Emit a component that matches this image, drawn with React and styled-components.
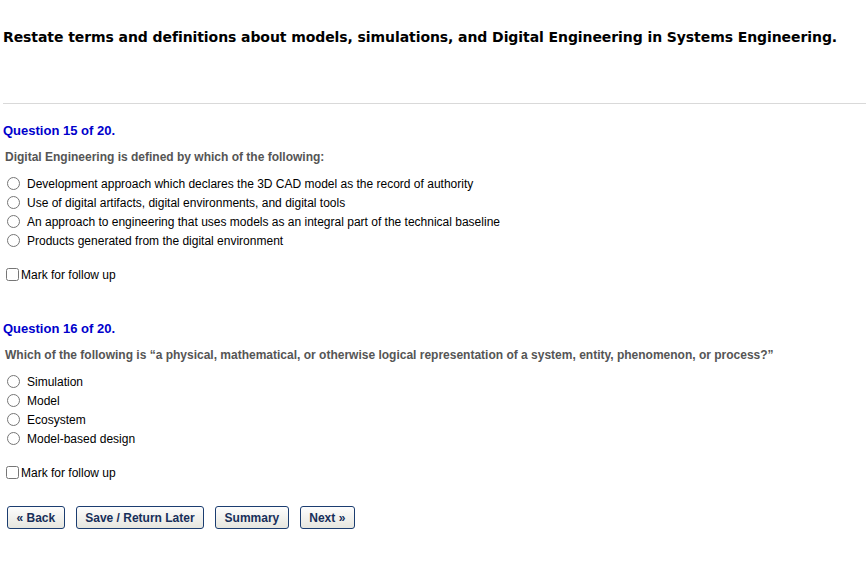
import React from 'react';
import styled, { createGlobalStyle } from 'styled-components';

const GlobalStyle = createGlobalStyle`
    body {
        margin: 0;
        background: #fff;
        font-family: "Liberation Sans", Arial, sans-serif;
        font-size: 12px;
        color: #000;
    }
`;

const Page = styled.div`
    padding: 0 0 40px 3px;
`;

const Header = styled.div`
    height: 104px;
    border-bottom: 1px solid #d9d9d9;
    box-sizing: border-box;
    padding-top: 28px;
`;

const Title = styled.h1`
    margin: 0;
    font-family: "DejaVu Sans", Verdana, sans-serif;
    font-size: 14px;
    line-height: 18px;
    font-weight: bold;
    letter-spacing: -0.08px;
    white-space: nowrap;
    color: #000;
`;

const Question = styled.div`
    padding-top: ${(props) => props.top}px;
`;

const QuestionNumber = styled.div`
    font-size: 13px;
    line-height: 16px;
    font-weight: bold;
    color: #0000cc;
`;

const Prompt = styled.div`
    margin-top: 11px;
    padding-left: 2px;
    font-weight: bold;
    line-height: 15px;
    color: #555;
`;

const Options = styled.div`
    margin-top: 9px;
    display: flex;
    flex-direction: column;
`;

const Option = styled.label`
    display: flex;
    align-items: center;
    height: 19px;
    color: #000;

    & input {
        width: 13px;
        height: 13px;
        margin: 0 7px 0 4px;
    }
`;

const FollowUp = styled.label`
    display: flex;
    align-items: center;
    height: 19px;
    margin-top: ${(props) => props.gap}px;
    color: #000;

    & input {
        width: 13px;
        height: 13px;
        margin: 0 2px 0 3px;
    }
`;

const Buttons = styled.div`
    display: flex;
    gap: 11px;
    margin-top: 24px;
    padding-left: 4px;
`;

const Button = styled.button`
    height: 23px;
    padding: 0 8.5px;
    border: 1px solid #1b3d70;
    border-radius: 3px;
    background: linear-gradient(#fdfdfd, #e6e6df);
    font-family: "Liberation Sans", Arial, sans-serif;
    font-size: 12px;
    font-weight: bold;
    color: #172f5a;
    cursor: pointer;
`;

const questions = [
    {
        number: 15,
        prompt: 'Digital Engineering is defined by which of the following:',
        options: [
            'Development approach which declares the 3D CAD model as the record of authority',
            'Use of digital artifacts, digital environments, and digital tools',
            'An approach to engineering that uses models as an integral part of the technical baseline',
            'Products generated from the digital environment',
        ],
    },
    {
        number: 16,
        prompt: 'Which of the following is \u201ca physical, mathematical, or otherwise logical representation of a system, entity, phenomenon, or process?\u201d',
        options: ['Simulation', 'Model', 'Ecosystem', 'Model-based design'],
    },
];

export default function App() {
    return (
        <Page>
            <GlobalStyle />
            <Header>
                <Title>
                    Restate terms and definitions about models, simulations, and Digital Engineering in Systems Engineering.
                </Title>
            </Header>
            {questions.map((q, i) => (
                <Question key={q.number} top={i === 0 ? 19 : 37}>
                    <QuestionNumber>Question {q.number} of 20.</QuestionNumber>
                    <Prompt>{q.prompt}</Prompt>
                    <Options>
                        {q.options.map((opt) => (
                            <Option key={opt}>
                                <input type="radio" name={`q${q.number}`} />
                                {opt}
                            </Option>
                        ))}
                    </Options>
                    <FollowUp gap={15}>
                        <input type="checkbox" />
                        Mark for follow up
                    </FollowUp>
                </Question>
            ))}
            <Buttons>
                <Button>« Back</Button>
                <Button>Save / Return Later</Button>
                <Button>Summary</Button>
                <Button>Next »</Button>
            </Buttons>
        </Page>
    );
}
